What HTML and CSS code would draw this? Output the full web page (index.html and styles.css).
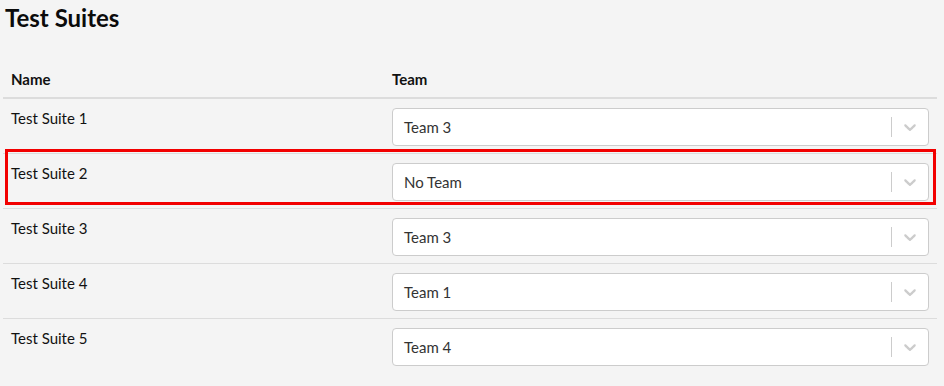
FILE: index.html
```html
<!DOCTYPE html>
<html lang="en">
<head>
    <meta charset="UTF-8" />
    <title>Test Suites</title>
    <link rel="stylesheet" href="styles.css">
</head>
<body>
    <h1 class="title">Test Suites</h1>
    <table class="suites">
        <thead>
            <tr>
                <th class="col-name">Name</th>
                <th>Team</th>
            </tr>
        </thead>
        <tbody>
            <tr>
                <td>Test Suite 1</td>
                <td>
                    <div class="select">
                        <div class="select-value">Team 3</div>
                        <span class="select-sep"></span>
                        <div class="select-arrow">
                            <svg width="20" height="20" viewBox="0 0 20 20"><path d="M4.516 7.548c0.436-0.446 1.043-0.481 1.576 0l3.908 3.747 3.908-3.747c0.533-0.481 1.141-0.446 1.574 0 0.436 0.445 0.408 1.197 0 1.615-0.406 0.418-4.695 4.502-4.695 4.502-0.217 0.223-0.502 0.335-0.787 0.335s-0.57-0.112-0.789-0.335c0 0-4.287-4.084-4.695-4.502s-0.436-1.17 0-1.615z"/></svg>
                        </div>
                    </div>
                </td>
            </tr>
            <tr>
                <td>Test Suite 2</td>
                <td>
                    <div class="select">
                        <div class="select-value">No Team</div>
                        <span class="select-sep"></span>
                        <div class="select-arrow">
                            <svg width="20" height="20" viewBox="0 0 20 20"><path d="M4.516 7.548c0.436-0.446 1.043-0.481 1.576 0l3.908 3.747 3.908-3.747c0.533-0.481 1.141-0.446 1.574 0 0.436 0.445 0.408 1.197 0 1.615-0.406 0.418-4.695 4.502-4.695 4.502-0.217 0.223-0.502 0.335-0.787 0.335s-0.57-0.112-0.789-0.335c0 0-4.287-4.084-4.695-4.502s-0.436-1.17 0-1.615z"/></svg>
                        </div>
                    </div>
                </td>
            </tr>
            <tr>
                <td>Test Suite 3</td>
                <td>
                    <div class="select">
                        <div class="select-value">Team 3</div>
                        <span class="select-sep"></span>
                        <div class="select-arrow">
                            <svg width="20" height="20" viewBox="0 0 20 20"><path d="M4.516 7.548c0.436-0.446 1.043-0.481 1.576 0l3.908 3.747 3.908-3.747c0.533-0.481 1.141-0.446 1.574 0 0.436 0.445 0.408 1.197 0 1.615-0.406 0.418-4.695 4.502-4.695 4.502-0.217 0.223-0.502 0.335-0.787 0.335s-0.57-0.112-0.789-0.335c0 0-4.287-4.084-4.695-4.502s-0.436-1.17 0-1.615z"/></svg>
                        </div>
                    </div>
                </td>
            </tr>
            <tr>
                <td>Test Suite 4</td>
                <td>
                    <div class="select">
                        <div class="select-value">Team 1</div>
                        <span class="select-sep"></span>
                        <div class="select-arrow">
                            <svg width="20" height="20" viewBox="0 0 20 20"><path d="M4.516 7.548c0.436-0.446 1.043-0.481 1.576 0l3.908 3.747 3.908-3.747c0.533-0.481 1.141-0.446 1.574 0 0.436 0.445 0.408 1.197 0 1.615-0.406 0.418-4.695 4.502-4.695 4.502-0.217 0.223-0.502 0.335-0.787 0.335s-0.57-0.112-0.789-0.335c0 0-4.287-4.084-4.695-4.502s-0.436-1.17 0-1.615z"/></svg>
                        </div>
                    </div>
                </td>
            </tr>
            <tr>
                <td>Test Suite 5</td>
                <td>
                    <div class="select">
                        <div class="select-value">Team 4</div>
                        <span class="select-sep"></span>
                        <div class="select-arrow">
                            <svg width="20" height="20" viewBox="0 0 20 20"><path d="M4.516 7.548c0.436-0.446 1.043-0.481 1.576 0l3.908 3.747 3.908-3.747c0.533-0.481 1.141-0.446 1.574 0 0.436 0.445 0.408 1.197 0 1.615-0.406 0.418-4.695 4.502-4.695 4.502-0.217 0.223-0.502 0.335-0.787 0.335s-0.57-0.112-0.789-0.335c0 0-4.287-4.084-4.695-4.502s-0.436-1.17 0-1.615z"/></svg>
                        </div>
                    </div>
                </td>
            </tr>
        </tbody>
    </table>
    <!-- highlight frame drawn over the second row -->
    <div class="mark"></div>
</body>
</html>
```

FILE: styles.css
```css
*{
    margin:0;
    padding:0;
    box-sizing:border-box;
}
body{
    position:relative;
    background:#f4f4f4;
    color:#111;
    font-family:Lato, "Open Sans", sans-serif;
    font-size:15px;
    padding:0 7px 0 3px;
}
.title{
    font-size:24px;
    font-weight:bold;
    line-height:36px;
    margin-left:2px;
    color:#0b0b0b;
}
.suites{
    width:100%;
    border-collapse:collapse;
    margin-top:24px;
}
.suites th{
    text-align:left;
    font-size:15px;
    font-weight:bold;
    line-height:20px;
    padding:9px 8px 8px;
    border-bottom:2px solid #dcdcdc;
}
.col-name{
    width:381px;
}
.suites td{
    vertical-align:top;
    line-height:20px;
    padding:9px 8px 7px;
    border-bottom:1px solid #dcdcdc;
}
.suites tr:last-child td{
    border-bottom:none;
}
.select{
    display:flex;
    align-items:center;
    height:38px;
    background:#fff;
    border:1px solid #ccc;
    border-radius:4px;
}
.select-value{
    flex:1;
    padding:2px 8px 2px 11px;
    color:#333;
    font-size:15px;
}
.select-sep{
    width:1px;
    align-self:stretch;
    margin:8px 0;
    background:#ccc;
}
.select-arrow{
    display:flex;
    padding:8px;
    fill:#ccc;
}
.mark{
    position:absolute;
    left:5px;
    top:149px;
    width:931px;
    height:56px;
    border:3px solid #f20000;
    pointer-events:none;
}
```
